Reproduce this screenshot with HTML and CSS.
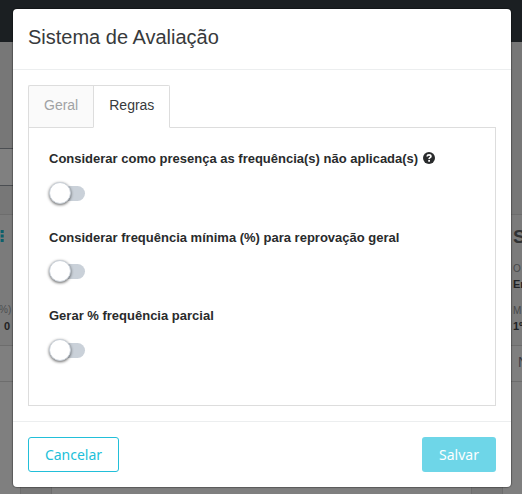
FILE: index.html
```html
<!DOCTYPE html>
<html lang="pt-BR">
<head>
<meta charset="utf-8">
<title>Sistema de Avaliação</title>
<link rel="stylesheet" href="styles.css">
</head>
<body>
<div class="page">
  <div class="topbar"></div>
  <div class="filters"><div class="field"></div></div>
  <div class="cards">
    <section class="card card-left">
      <div class="card-body">
        <svg class="dots" width="6" height="14" viewBox="0 0 6 14"><path d="M.7 1h3v3h-3zM.7 5.5h3v3h-3zM.7 10h3v3h-3z" fill="#0b606c"/></svg>
        <div class="unit">%)</div>
        <div class="count">0</div>
      </div>
      <div class="card-row"></div>
    </section>
    <section class="card"></section>
    <section class="card card-right">
      <div class="card-body">
        <div class="card-title">S</div>
        <div class="key">O</div>
        <div class="value">En</div>
        <div class="key key-second">M</div>
        <div class="value">1º</div>
      </div>
      <div class="card-row">N</div>
    </section>
  </div>
</div>
<div class="modal" role="dialog">
  <header class="modal-header"><h1>Sistema de Avaliação</h1></header>
  <main class="modal-body">
    <nav class="tabs">
      <a class="tab">Geral</a>
      <a class="tab active">Regras</a>
    </nav>
    <div class="panel">
      <div class="rule">
        <div class="label">Considerar como presença as frequência(s) não aplicada(s)
          <svg class="help" width="12" height="12" viewBox="0 0 12 12"><circle cx="6" cy="6" r="6" fill="#292b2c"/><path d="M4.1 4.5C4.2 3.3 5 2.8 6 2.8c1.1 0 1.9.6 1.9 1.6C7.9 5.7 6.1 5.6 6.1 7" fill="none" stroke="#fff" stroke-width="1.7"/><rect x="5.2" y="7.9" width="1.8" height="1.8" fill="#fff"/></svg>
        </div>
        <div class="switch"><span class="knob"></span></div>
      </div>
      <div class="rule compact">
        <div class="label">Considerar frequência mínima (%) para reprovação geral</div>
        <div class="switch"><span class="knob"></span></div>
      </div>
      <div class="rule">
        <div class="label">Gerar % frequência parcial</div>
        <div class="switch"><span class="knob"></span></div>
      </div>
    </div>
  </main>
  <footer class="modal-footer">
    <button class="btn outline">Cancelar</button>
    <button class="btn primary">Salvar</button>
  </footer>
</div>
</body>
</html>
```
FILE: styles.css
```css
* { box-sizing: border-box; }
body { margin: 0; overflow: hidden; font-family: "Liberation Sans", Arial, sans-serif; font-size: 14px; color: #292b2c; }
.page { height: 494px; display: flex; flex-direction: column; background: #777; overflow: hidden; }
.topbar { height: 42px; flex: none; background: #1b1f22; }
.filters { height: 172px; flex: none; padding-top: 106px; }
.field { width: 60px; height: 38px; border: 1px solid #4b4e52; border-left: 0; background: #808080; }
.cards { flex: 1; display: grid; grid-template-columns: 21px 421px 1fr; column-gap: 30px; }
.card { background: #7f7f7f; border: 1px solid #6d6d6d; border-bottom: 0; overflow: hidden; white-space: nowrap; }
.card-left { border-left: 0; }
.card-right { border-right: 0; }
.card-body { height: 131px; background: #7b7b7b; border-bottom: 1px solid #6d6d6d; }
.card-row { height: 36px; padding: 8px 0 0 15px; border-bottom: 1px solid #6d6d6d; font-size: 14px; color: #3a3c46; }
.card-left .card-body { padding-top: 14px; }
.dots { display: block; }
.unit { margin: 61px 0 0 -1px; font-size: 10px; line-height: 12px; color: #4c4e50; }
.count { margin: 3px 0 0 4px; font-size: 11px; line-height: 14px; font-weight: bold; color: #222; }
.card-right .card-body { padding: 10px 0 0 10px; }
.card-title { height: 24px; line-height: 24px; font-size: 19px; font-weight: bold; color: #303234; }
.key { margin-top: 13px; height: 14px; line-height: 14px; font-size: 10px; color: #46484a; }
.key.key-second { margin-top: 11px; }
.value { height: 17px; line-height: 17px; font-size: 11px; font-weight: bold; color: #202224; }

.modal { position: absolute; left: 13px; top: 9px; width: 498px; height: 478px; display: flex; flex-direction: column; background: #fff; border-radius: 4px; box-shadow: 0 0 1px 1px rgba(0, 0, 0, .3); }
.modal-header { height: 61px; flex: none; padding: 15px 15px 0; border-bottom: 1px solid #eceeef; }
h1 { margin: 0; font-size: 20px; line-height: 26px; font-weight: normal; color: #373a3c; }
.modal-body { height: 352px; flex: none; padding: 15px 15px 0; }
.tabs { display: flex; height: 43px; }
.tab { height: 43px; padding: 0 15px; line-height: 38px; border: 1px solid #ddd; border-right: 0; background: #fafafa; color: #a0a2a4; border-radius: 2px 0 0 0; }
.tab.active { background: #fff; border-right: 1px solid #ddd; border-bottom-color: #fff; color: #373a3c; border-radius: 0 2px 0 0; position: relative; }
.panel { height: 279px; margin-top: -1px; padding: 21px 20px 0; border: 1px solid #ddd; }
.rule { height: 79px; }
.rule.compact { height: 78px; }
.label { height: 20px; line-height: 20px; font-size: 13px; font-weight: bold; white-space: nowrap; }
.help { margin-left: 1px; vertical-align: -1px; }
.switch { width: 35px; height: 15px; margin: 17px 0 0 1px; border-radius: 8px; background: #cad1d9; }
.compact .switch { margin-top: 16px; }
.knob { display: block; width: 22px; height: 22px; margin-left: -1px; transform: translateY(-4px); border: 1px solid #cad1d9; border-radius: 50%; background: #fff; box-shadow: 0 1px 3px rgba(0, 0, 0, .6); }
.modal-footer { flex: 1; display: flex; justify-content: space-between; align-items: flex-start; padding: 15px 15px 0; border-top: 1px solid #eceeef; margin-top: -1px; }
.btn { height: 35px; padding: 0; border-radius: 3px; font: 14px "Noto Sans", sans-serif; }
.outline { width: 91px; border: 1px solid #22bfd9; background: #fff; color: #22bfd9; }
.primary { width: 74px; border: 0; background: #6ed6e8; color: #fff; }
```
